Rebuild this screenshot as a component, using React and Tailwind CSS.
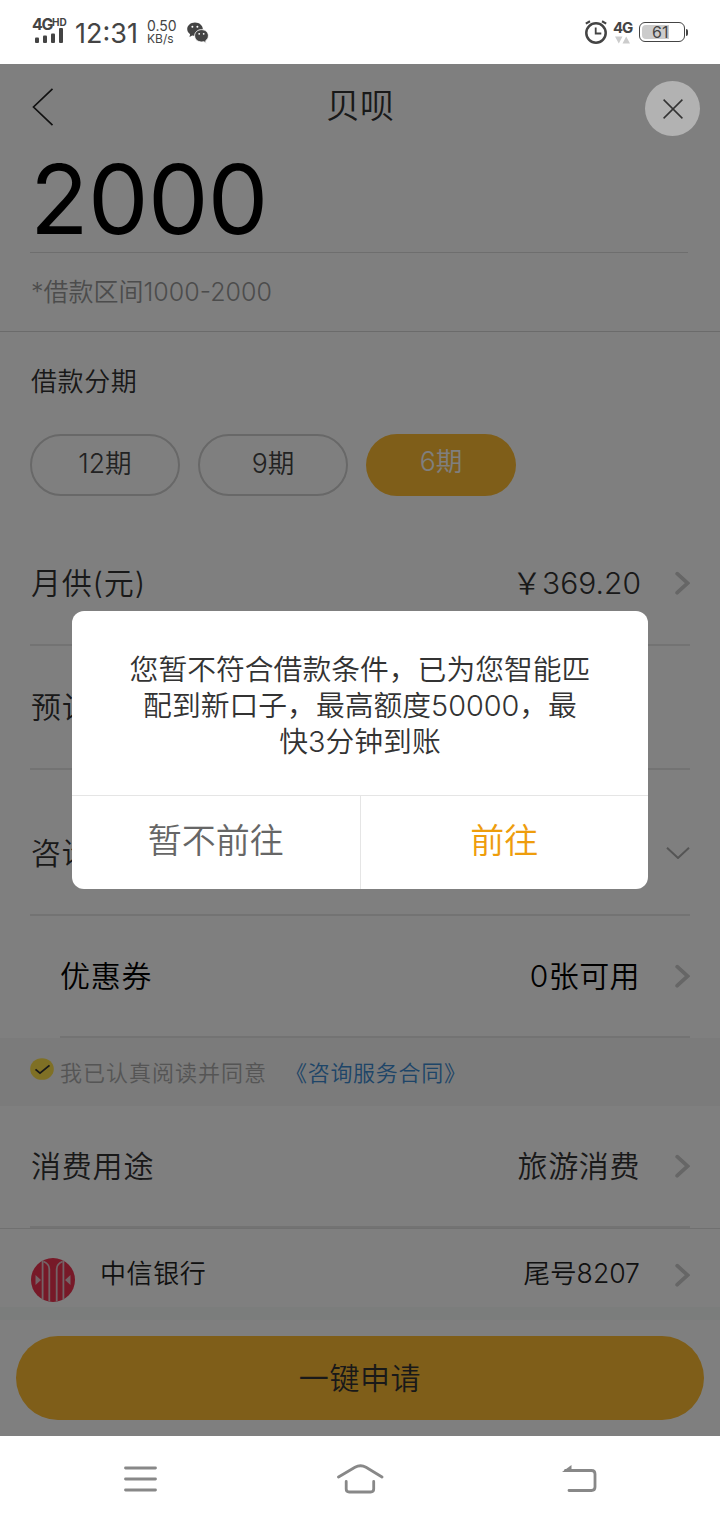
import clsx from 'clsx'

const ChevronRight = () => (
  <svg className="ml-[33px] h-6 w-[17px] shrink-0" viewBox="0 0 17 24" fill="none" stroke="#ccc" strokeWidth="3.800">
    <path d="M4.200 2.700 14.600 12.200 4.200 21.700" strokeLinecap="round" />
  </svg>
)

const StatusBar = () => (
  <div className="flex h-16 w-full shrink-0 items-center bg-white text-[#444]">
    <div className="mt-[-3px] ml-8 flex h-[25px] w-[35px] flex-col">
      <div className="mt-px flex h-[8px]">
        <span className="w-5 text-[16px] leading-[10px] font-bold tracking-[-1.4px]">4G</span>
        <span className="text-[10px] leading-[6px] font-bold">HD</span>
      </div>
      <svg className="ml-[3px] h-4 w-7 shrink-0" viewBox="0 0 28 16" fill="#444">
        <rect x="0" y="10.500" width="4" height="5.500" rx="1" />
        <rect x="8" y="8.500" width="4" height="7.500" rx="1" />
        <rect x="16" y="6.500" width="4" height="9.500" rx="1" />
        <rect x="24" y="1" width="4" height="15" rx="1" />
      </svg>
    </div>
    <span className="mt-1 ml-[8px] w-[66px] text-[27px] leading-8">12:31</span>
    <div className="ml-[6px] w-9">
      <div className="text-[14px] leading-[13px]">0.50</div>
      <div className="text-[12px] leading-[13px]">KB/s</div>
    </div>
    <svg className="mt-px ml-[4px] h-[22px] w-[22px]" viewBox="0 0 22 22" fill="#444">
      <path d="M8 .5C3.600.5.2 3.400.2 7.100c0 2.100 1.100 3.900 2.900 5.100l-.6 2.700 2.700-1.500c.9.2 1.800.3 2.800.3 4.400 0 7.800-2.900 7.800-6.600S12.400.5 8 .5Z" />
      <circle cx="5.400" cy="4.800" r="1" fill="#fff" />
      <circle cx="10.400" cy="4.800" r="1" fill="#fff" />
      <path
        d="M14.600 7.600c-3.900 0-7 2.700-7 6.200s3.100 6.200 7 6.200c.8 0 1.600-.1 2.300-.300l2.300 1.500-.5-2.500c1.700-1.200 2.700-2.900 2.700-4.900 0-3.500-3-6.200-6.800-6.200Z"
        stroke="#fff"
        strokeWidth=".9"
      />
      <circle cx="12.200" cy="11.800" r=".9" fill="#fff" />
      <circle cx="16.700" cy="11.800" r=".9" fill="#fff" />
    </svg>

    <svg className="ml-auto h-6 w-6" viewBox="0 0 24 24" fill="none" stroke="#444">
      <circle cx="12" cy="13" r="9.700" strokeWidth="2.500" />
      <path d="M11.700 7.500v6h5.600" strokeWidth="1.800" />
      <path d="M1.800 3.600 6 1.300M22.200 3.600 18 1.300" strokeWidth="2.200" />
    </svg>
    <div className="ml-[5px] flex w-5 flex-col">
      <span className="text-[15px] leading-[13px] font-bold tracking-[-1.2px]">4G</span>
      <svg className="mt-[2px] ml-[2px] h-2 w-4" viewBox="0 0 16 8" fill="#ccc">
        <path d="M0 .5h7.500L3.800 7.500ZM7.500 7.500H15L11.200.5Z" />
      </svg>
    </div>
    <div className="ml-[6px] flex h-5 w-[46px] items-center rounded-[6px] border border-[#444] p-[2px]">
      <div className="h-[14px] w-[27px] rounded-l-[4px] bg-[#ccc]">
        <span className="ml-[10px] block text-[16px] leading-[14px]">61</span>
      </div>
    </div>
    <div className="mr-8 ml-px h-[7px] w-[2px] rounded-r-[2px] bg-[#444]" />
  </div>
)

const Row = ({ label, children, className }) => (
  <div className={clsx('flex shrink-0 items-center border-b-2 border-[#e6e6e6] text-[30px] leading-9', className)}>
    <span className="whitespace-nowrap tracking-[0.8px]">{label}</span>
    <div className="ml-auto flex items-center">{children}</div>
  </div>
)

const BankLogo = () => (
  <svg className="h-11 w-11 shrink-0" viewBox="0 0 44 44">
    <circle cx="22" cy="22" r="22" fill="#ee3350" />
    <g fill="none" stroke="#e8c4cc" strokeWidth="1.800">
      <path d="M11.600 2.500v39M32.400 2.500v39" />
      <path d="M12.500 3.500Q18.300 6 18.300 11v32.500M31.500 3.500Q25.700 6 25.700 11v32.500" />
    </g>
    <path d="M4.500 17v10l5.500-5ZM39.500 17v10l-5.500-5Z" fill="#e8c4cc" />
  </svg>
)

const Dialog = () => (
  <div className="absolute inset-0 flex items-center justify-center bg-black/50">
    <div className="flex h-[278px] w-[576px] flex-col overflow-hidden rounded-[12px] bg-white">
      <div className="h-[184px] pt-[41px] text-center text-[28.800px] leading-9 text-[#333]">
        <p>您暂不符合借款条件，已为您智能匹</p>
        <p>配到新口子，最高额度50000，最</p>
        <p>快3分钟到账</p>
      </div>
      <div className="flex flex-1 border-t border-[#e5e5e5] text-[34px]">
        <button className="flex-1 border-r border-[#e5e5e5] pb-[5px] text-[#666]">暂不前往</button>
        <button className="flex-1 pb-[5px] text-[#ee9d0c]">前往</button>
      </div>
    </div>
    <button className="absolute top-[17px] right-5 flex h-[55px] w-[55px] items-center justify-center rounded-full bg-[#b2b2b2]">
      <svg className="h-5 w-5" viewBox="0 0 20 20" stroke="#333" strokeWidth="1.500">
        <path d="M.6.6l18.800 18.800M19.400.6.6 19.400" />
      </svg>
    </button>
  </div>
)

const NavBar = () => (
  <div className="flex h-[84px] shrink-0 items-center justify-between bg-white pt-px pr-[122px] pl-[123px]">
    <svg className="h-7 w-[35px]" viewBox="0 0 35 28" fill="none" stroke="#888" strokeWidth="2.800" strokeLinecap="round">
      <path d="M2.500 3h30M2.500 14h30M2.500 25h30" />
    </svg>
    <svg className="h-[30px] w-12" viewBox="0 0 48 30" fill="none" stroke="#888" strokeWidth="2.800" strokeLinecap="round">
      <path d="M2.500 13 19 3.300C23 1 26 1 30 3.300L46 13" />
      <path d="M10.200 17.500v7.500q0 3 3 3h21.500q3 0 3-3v-7.500" />
    </svg>
    <svg className="h-[30px] w-9" viewBox="0 0 36 30" fill="none" stroke="#888" strokeWidth="2.800" strokeLinecap="round">
      <path d="M7 26.500H29.500q3.500 0 3.500-3.500V10q0-3.500-3.500-3.500H3.500" />
      <path d="M0 7.900 9.500 1v6.900Z" fill="#888" stroke="none" />
    </svg>
  </div>
)

export default function App() {
  const terms = ['12期', '9期', '6期']
  const selected = '6期'

  return (
    <div className="flex h-[1520px] w-[720px] flex-col overflow-hidden bg-white font-['Inter','Noto_Sans_CJK_SC',sans-serif]">
      <StatusBar />

      <div className="relative flex h-[1372px] shrink-0 flex-col bg-white font-[350] text-[#333]">
        <header className="flex h-[86px] shrink-0 items-center pl-8">
          <svg className="h-[38px] w-[22px]" viewBox="0 0 22 38" fill="none" stroke="#222" strokeWidth="1.700">
            <path d="M20.500.8 1.500 19l19 18.200" />
          </svg>
          <h1 className="mr-[54px] mb-[2px] flex-1 text-center text-[34px] leading-10">贝呗</h1>
        </header>

        <div className="mr-8 ml-[30px] flex h-[103px] shrink-0 items-center border-b border-[#dcdcdc] pb-[4px]">
          <span className="text-[96px] leading-[96px] font-[370] tracking-[-0.6px] text-black">2000</span>
        </div>
        <div className="flex h-[79px] shrink-0 items-center border-b border-[#d6d6d6] pt-px pl-[31px] text-[25px] text-[#999]">
          *借款区间1000-2000
        </div>

        <div className="flex h-[190px] shrink-0 flex-col pt-8 pl-[30px]">
          <h2 className="ml-px text-[26px] leading-9 tracking-[0.6px]">借款分期</h2>
          <div className="mt-[34px] flex gap-[18px] text-[26.600px]">
            {terms.map((term) => (
              <div
                key={term}
                className={clsx(
                  'flex h-[62px] w-[150px] items-center justify-center rounded-full',
                  term === selected ? 'bg-[#ffbc32] pb-[6px] text-white' : 'border-2 border-[#d0d0d0] pb-[2px] text-[#444]'
                )}
              >
                {term}
              </div>
            ))}
          </div>
        </div>

        <Row label="月供(元)" className="mx-[30px] h-[124px] pl-px">
          <span className="-mr-px">￥369.20</span>
          <ChevronRight />
        </Row>
        <Row label="预计" className="mx-[30px] h-[124px] pl-px" />
        <Row label="咨询" className="mx-[30px] h-[146px] pt-[22px] pl-px">
          <svg className="h-3 w-6" viewBox="0 0 24 12" fill="none" stroke="#aaa" strokeWidth="2">
            <path d="M1 .8 12 11 23 .8" />
          </svg>
        </Row>
        <Row label="优惠券" className="mr-[30px] ml-[60px] h-[122px] text-black">
          <span className="tracking-[0.4px]">0张可用</span>
          <ChevronRight />
        </Row>

        <div className="flex h-[68px] shrink-0 items-center bg-[#f6f6f6] pt-[2px] pl-[30px] text-[22px]">
          <svg className="mb-2 h-[22px] w-6" viewBox="0 0 24 24" preserveAspectRatio="none">
            <circle cx="12" cy="12" r="11.800" fill="#ffe04a" />
            <path d="M5.500 12.500 10 16.500 19.500 8" fill="none" stroke="#333" strokeWidth="1.800" />
          </svg>
          <span className="ml-[6px] tracking-[1px] text-[#aaa]">我已认真阅读并同意</span>
          <span className="ml-[18px] tracking-[0.7px] text-[#3c8ad0]">《咨询服务合同》</span>
        </div>

        <div className="shrink-0 border-b border-[#e0e0e0]">
          <Row label="消费用途" className="mx-[30px] h-[122px] pl-px">
            <span className="tracking-[0.6px]">旅游消费</span>
            <ChevronRight />
          </Row>
        </div>

        <div className="flex h-[78px] shrink-0 items-center px-[30px] pt-[10px] text-[26px] text-[#222]">
          <div className="mt-[14px] ml-px">
            <BankLogo />
          </div>
          <span className="ml-[25px] tracking-[0.6px]">中信银行</span>
          <span className="mt-px ml-auto text-[26.600px]">尾号8207</span>
          <div className="mt-1">
            <ChevronRight />
          </div>
        </div>
        <div className="h-[13px] shrink-0 bg-[#f7faf8]" />

        <div className="px-4 pt-4">
          <button className="h-[84px] w-full rounded-full bg-[#ffbc32] text-[30px] tracking-[0.6px]">一键申请</button>
        </div>

        <Dialog />
      </div>

      <NavBar />
    </div>
  )
}
